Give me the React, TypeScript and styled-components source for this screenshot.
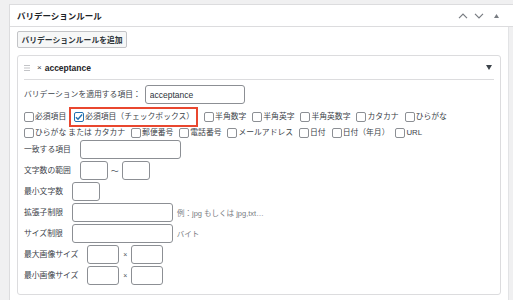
import React from 'react';
import styled, { createGlobalStyle } from 'styled-components';

const GlobalStyle = createGlobalStyle`
  html, body {
    margin: 0;
    padding: 0;
    background: #f0f0f1;
  }
  body {
    font-family: "Liberation Sans", "Noto Sans CJK JP", sans-serif;
  }
  * {
    box-sizing: border-box;
  }
`;

const Page = styled.div`
  width: 513px;
  height: 300px;
  overflow: hidden;
  padding: 4px 0 0 9px;
`;

const Panel = styled.section`
  height: calc(100% + 2px);
  display: flex;
  flex-direction: column;
  background: #fff;
  border: 1px solid #dcdcde;
  border-right: none;
`;

const PanelHeader = styled.div`
  height: 22px;
  flex-shrink: 0;
  display: flex;
  align-items: center;
  justify-content: space-between;
  padding: 0 14px 0 7px;
  border-bottom: 1px solid #dcdcde;
`;

const Title = styled.h2`
  margin: 0;
  font-size: 8.5px;
  line-height: 12px;
  font-weight: 700;
  color: #1d2327;
`;

const Controls = styled.div`
  display: flex;
  align-items: center;
  gap: 6px;
  svg:last-child {
    margin-left: 4px;
  }
`;

const PanelBody = styled.div`
  flex: 1;
  display: flex;
  min-height: 0;
`;

const Content = styled.div`
  flex: 1;
  padding: 4px 7px 0 7px;
`;

const SideStrip = styled.div`
  width: 5px;
  background: #f0f0f1;
  border-left: 1px solid #e2e3e5;
`;

const AddButton = styled.button`
  display: block;
  height: 17px;
  width: 110px;
  padding: 0 3px;
  font-family: inherit;
  font-size: 7.8px;
  font-weight: 700;
  color: #2c3338;
  background: #f6f7f7;
  border: 1px solid #c3c4c7;
  border-radius: 2px;
  white-space: nowrap;
`;

const RuleBox = styled.div`
  margin-top: 7px;
  border: 1px solid #dcdcde;
  border-radius: 3px;
  padding-bottom: 9px;
`;

const RuleHeader = styled.div`
  height: 24px;
  margin: 0 6px;
  display: flex;
  align-items: center;
  border-bottom: 1px solid #dcdcde;
`;

const Close = styled.span`
  margin-left: 7px;
  font-size: 8px;
  color: #3c434a;
`;

const RuleName = styled.span`
  margin-left: 3px;
  font-size: 8.5px;
  font-weight: 700;
  color: #1d2327;
`;

const Toggle = styled.svg`
  margin-left: auto;
  margin-right: 2px;
`;

const RuleBody = styled.div`
  padding: 4px 6px 0;
  display: flex;
  flex-direction: column;
`;

const Row = styled.div`
  display: flex;
  align-items: center;
  height: 21px;
`;

const Label = styled.span<{ $gap?: number }>`
  margin-right: ${p => p.$gap ?? 9}px;
  font-size: 7.8px;
  line-height: 12px;
  color: #3c434a;
  white-space: nowrap;
`;

const Input = styled.input<{ $w: number }>`
  width: ${p => p.$w}px;
  height: 19px;
  padding: 0 4px;
  border: 1px solid #8c8f94;
  border-radius: 3px;
  font-family: inherit;
  font-size: 8.5px;
  color: #2c3338;
  background: #fff;
  outline: none;
`;

const CheckList = styled.div`
  display: flex;
  flex-wrap: wrap;
  align-items: center;
  column-gap: 6px;
  margin-top: 2px;
`;

const CheckItem = styled.label<{ $highlight?: boolean }>`
  display: inline-flex;
  align-items: center;
  gap: 1px;
  font-size: 7.8px;
  line-height: 12px;
  color: #3c434a;
  white-space: nowrap;
  ${p =>
    p.$highlight &&
    `
    border: 2px solid #e9472f;
    padding: 2px 2px 2px 3px;
    margin: 0 0 0 -3px;
  `}
`;

const Box = styled.span<{ $checked?: boolean }>`
  width: 10px;
  height: 10px;
  flex-shrink: 0;
  display: inline-flex;
  align-items: center;
  justify-content: center;
  border: 1px solid ${p => (p.$checked ? '#2271b1' : '#8c8f94')};
  border-radius: 2px;
  background: #fff;
`;

const Fields = styled.div`
  display: flex;
  flex-direction: column;
  gap: 2px;
  margin-top: 1px;
`;

const FieldRow = styled.div`
  display: flex;
  align-items: center;
  height: 19px;
`;

const Sep = styled.span<{ $small?: boolean }>`
  margin: 0 ${p => (p.$small ? 4 : 3)}px;
  font-size: ${p => (p.$small ? 7 : 8)}px;
  color: #50575e;
`;

const Hint = styled.span`
  margin-left: 4px;
  font-size: 7.5px;
  color: #787c82;
  white-space: nowrap;
`;

const Chevron = ({ up }: { up?: boolean }) => (
  <svg width="10" height="6" viewBox="0 0 10 6">
    <path
      d={up ? 'M1 5.2 L5 1.2 L9 5.2' : 'M1 0.8 L5 4.8 L9 0.8'}
      fill="none"
      stroke="#787c82"
      strokeWidth="1.2"
    />
  </svg>
);

const Check = () => (
  <svg width="9" height="8" viewBox="0 0 9 8">
    <path d="M1 4.2 L3.4 6.6 L8 1.2" fill="none" stroke="#2271b1" strokeWidth="1.6" />
  </svg>
);

const checks = [
  { text: '必須項目' },
  { text: '必須項目（チェックボックス）', checked: true, highlight: true },
  { text: '半角数字' },
  { text: '半角英字' },
  { text: '半角英数字' },
  { text: 'カタカナ' },
  { text: 'ひらがな' },
  { text: 'ひらがな または カタカナ' },
  { text: '郵便番号' },
  { text: '電話番号' },
  { text: 'メールアドレス' },
  { text: '日付' },
  { text: '日付（年月）' },
  { text: 'URL' },
];

export default function App() {
  return (
    <>
      <GlobalStyle />
      <Page>
        <Panel>
          <PanelHeader>
            <Title>バリデーションルール</Title>
            <Controls>
              <Chevron up />
              <Chevron />
              <svg width="5" height="4" viewBox="0 0 5 4">
                <path d="M0 4 L2.5 0 L5 4 Z" fill="#787c82" />
              </svg>
            </Controls>
          </PanelHeader>
          <PanelBody>
            <Content>
              <AddButton>バリデーションルールを追加</AddButton>
              <RuleBox>
                <RuleHeader>
                  <svg width="6" height="6" viewBox="0 0 6 6">
                    <path d="M0 0.5 H6 M0 3 H6 M0 5.5 H6" stroke="#c3c4c7" strokeWidth="1" />
                  </svg>
                  <Close>×</Close>
                  <RuleName>acceptance</RuleName>
                  <Toggle width="6" height="5" viewBox="0 0 6 5">
                    <path d="M0 0 L6 0 L3 5 Z" fill="#3c434a" />
                  </Toggle>
                </RuleHeader>
                <RuleBody>
                  <Row>
                    <Label $gap={4}>バリデーションを適用する項目：</Label>
                    <Input $w={100} defaultValue="acceptance" />
                  </Row>
                  <CheckList>
                    {checks.map(c => (
                      <CheckItem key={c.text} $highlight={c.highlight}>
                        <Box $checked={c.checked}>{c.checked && <Check />}</Box>
                        {c.text}
                      </CheckItem>
                    ))}
                  </CheckList>
                  <Fields>
                    <FieldRow>
                      <Label>一致する項目</Label>
                      <Input $w={101} />
                    </FieldRow>
                    <FieldRow>
                      <Label>文字数の範囲</Label>
                      <Input $w={28} />
                      <Sep>〜</Sep>
                      <Input $w={28} />
                    </FieldRow>
                    <FieldRow>
                      <Label>最小文字数</Label>
                      <Input $w={28} />
                    </FieldRow>
                    <FieldRow>
                      <Label>拡張子制限</Label>
                      <Input $w={101} />
                      <Hint>例：jpg もしくは jpg,txt…</Hint>
                    </FieldRow>
                    <FieldRow>
                      <Label>サイズ制限</Label>
                      <Input $w={101} />
                      <Hint>バイト</Hint>
                    </FieldRow>
                    <FieldRow>
                      <Label>最大画像サイズ</Label>
                      <Input $w={32} />
                      <Sep $small>×</Sep>
                      <Input $w={32} />
                    </FieldRow>
                    <FieldRow>
                      <Label>最小画像サイズ</Label>
                      <Input $w={32} />
                      <Sep $small>×</Sep>
                      <Input $w={32} />
                    </FieldRow>
                  </Fields>
                </RuleBody>
              </RuleBox>
            </Content>
            <SideStrip />
          </PanelBody>
        </Panel>
      </Page>
    </>
  );
}
